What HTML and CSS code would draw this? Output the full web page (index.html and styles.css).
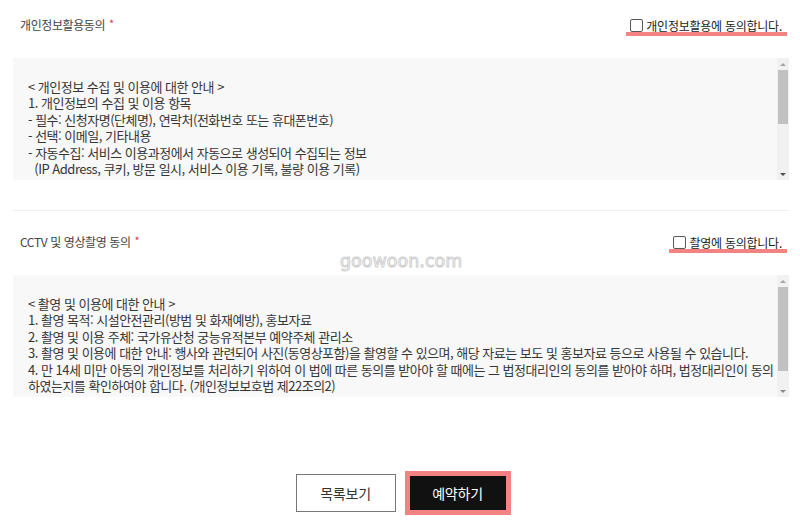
FILE: index.html
```html
<!DOCTYPE html>
<html lang="ko">
<head>
<meta charset="utf-8">
<title>동의</title>
<link rel="stylesheet" href="styles.css">
</head>
<body>
<div class="page">
  <section class="agree first">
    <div class="agree-head">
      <span class="agree-title">개인정보활용동의 <em>*</em></span>
      <label class="agree-check"><span class="box-check"></span><span class="check-text">개인정보활용에 동의합니다.</span></label>
    </div>
    <div class="terms">
      <div class="terms-text">
        &lt; 개인정보 수집 및 이용에 대한 안내 &gt;<br>
        1. 개인정보의 수집 및 이용 항목<br>
        - 필수: 신청자명(단체명), 연락처(전화번호 또는 휴대폰번호)<br>
        - 선택: 이메일, 기타내용<br>
        - 자동수집: 서비스 이용과정에서 자동으로 생성되어 수집되는 정보<br>
        &nbsp;&nbsp;(IP Address, 쿠키, 방문 일시, 서비스 이용 기록, 불량 이용 기록)<br>
        2. 개인정보의 수집 및 이용 목적: 관람예약 신청 확인 및 통지<br>
        3. 개인정보의 보유 및 이용 기간<br>
        - 예약 완료 후 1년
      </div>
      <div class="sbar">
        <span class="sbar-btn up"></span>
        <span class="sbar-track"><span class="sbar-thumb t1"></span></span>
        <span class="sbar-btn down"></span>
      </div>
    </div>
  </section>

  <section class="agree second">
    <div class="agree-head">
      <span class="agree-title">CCTV 및 영상촬영 동의 <em>*</em></span>
      <label class="agree-check"><span class="box-check"></span><span class="check-text">촬영에 동의합니다.</span></label>
    </div>
    <div class="terms">
      <div class="terms-text">
        &lt; 촬영 및 이용에 대한 안내 &gt;<br>
        1. 촬영 목적: 시설안전관리(방범 및 화재예방), 홍보자료<br>
        2. 촬영 및 이용 주체: 국가유산청 궁능유적본부 예약주체 관리소<br>
        3. 촬영 및 이용에 대한 안내: 행사와 관련되어 사진(동영상포함)을 촬영할 수 있으며, 해당 자료는 보도 및 홍보자료 등으로 사용될 수 있습니다.<br>
        4. 만 14세 미만 아동의 개인정보를 처리하기 위하여 이 법에 따른 동의를 받아야 할 때에는 그 법정대리인의 동의를 받아야 하며, 법정대리인이 동의<br>
        하였는지를 확인하여야 합니다. (개인정보보호법 제22조의2)
      </div>
      <div class="sbar">
        <span class="sbar-btn up"></span>
        <span class="sbar-track"><span class="sbar-thumb t2"></span></span>
        <span class="sbar-btn down light"></span>
      </div>
    </div>
    <span class="watermark">goowoon.com</span>
  </section>

  <div class="actions">
    <button class="btn btn-list" type="button">목록보기</button>
    <button class="btn btn-reserve" type="button">예약하기</button>
  </div>
</div>
</body>
</html>
```

FILE: styles.css
```css
* { box-sizing: border-box; }
html, body { margin: 0; padding: 0; background: #fff; }
body {
  font-family: "Noto Sans CJK KR", "Noto Sans", sans-serif;
  color: #333;
  width: 800px;
  height: 528px;
  overflow: hidden;
}
.page { padding: 0 11px 0 13px; }

.agree { position: relative; }
.agree.first { padding-bottom: 30px; border-bottom: 1px solid #eeeeee; }

.agree-head {
  display: flex;
  align-items: center;
  justify-content: space-between;
  padding: 15px 2px 23px 7px;
  height: 58px;
}
.agree.second .agree-head { padding-top: 21px; padding-bottom: 23px; height: 64px; }

.agree-title {
  font-size: 12px;
  line-height: 20px;
  color: #444;
  letter-spacing: -0.4px;
}
.agree-title em {
  font-style: normal;
  color: #d9334f;
  font-size: 11px;
  margin-left: 1px;
  position: relative;
  top: -2px;
}

.agree-check {
  display: inline-flex;
  align-items: center;
  gap: 3px;
  margin-top: 5px;
  padding: 0 5px 0 4px;
  border-bottom: 4px solid #f38383;
  height: 17px;
}
.box-check {
  width: 13px;
  height: 13px;
  border: 1px solid #5a5a5a;
  border-radius: 2px;
  background: #fff;
}
.check-text {
  font-size: 12px;
  line-height: 13px;
  color: #222;
  letter-spacing: -0.25px;
}

.terms {
  display: flex;
  height: 122px;
  background: #f8f8f8;
}
.terms-text {
  flex: 1;
  overflow: hidden;
  padding: 21px 10px 0 15px;
  font-size: 13px;
  line-height: 16.45px;
  color: #363636;
  letter-spacing: -0.5px;
  white-space: nowrap;
}

.sbar {
  width: 12px;
  display: flex;
  flex-direction: column;
  background: #f1f1f1;
}
.sbar-btn {
  height: 12px;
  display: flex;
  align-items: center;
  justify-content: center;
}
.sbar-btn::before {
  content: "";
  width: 0;
  height: 0;
  border-left: 3px solid transparent;
  border-right: 3px solid transparent;
}
.sbar-btn.up::before { border-bottom: 3px solid #a3a3a3; }
.sbar-btn.down::before { border-top: 3px solid #505050; }
.sbar-btn.down.light::before { border-top-color: #8a8a8a; }
.sbar-track { flex: 1; padding: 0 1px; }
.sbar-thumb { display: block; background: #c1c1c1; }
.sbar-thumb.t1 { height: 54px; }
.sbar-thumb.t2 { height: 84px; }

.watermark {
  position: absolute;
  left: 327px;
  top: 40px;
  font-family: "DejaVu Sans", sans-serif;
  font-size: 17.5px;
  color: #fff;
  -webkit-text-stroke: 1px #cfcfcf;
}

.actions {
  display: flex;
  justify-content: center;
  align-items: center;
  gap: 14px;
  margin-top: 77px;
  padding-right: 1px;
}
.btn {
  font-family: "Noto Sans CJK KR", "Noto Sans", sans-serif;
  font-size: 14px;
  letter-spacing: -0.2px;
  height: 38px;
  border-radius: 0;
  padding: 0;
  cursor: pointer;
}
.btn-list {
  width: 100px;
  background: #fff;
  color: #333;
  border: 1px solid #777;
}
.btn-reserve {
  width: 96px;
  height: 34px;
  background: #111;
  color: #fff;
  border: 0;
  box-shadow: 0 0 0 5px #f38383;
}
```
